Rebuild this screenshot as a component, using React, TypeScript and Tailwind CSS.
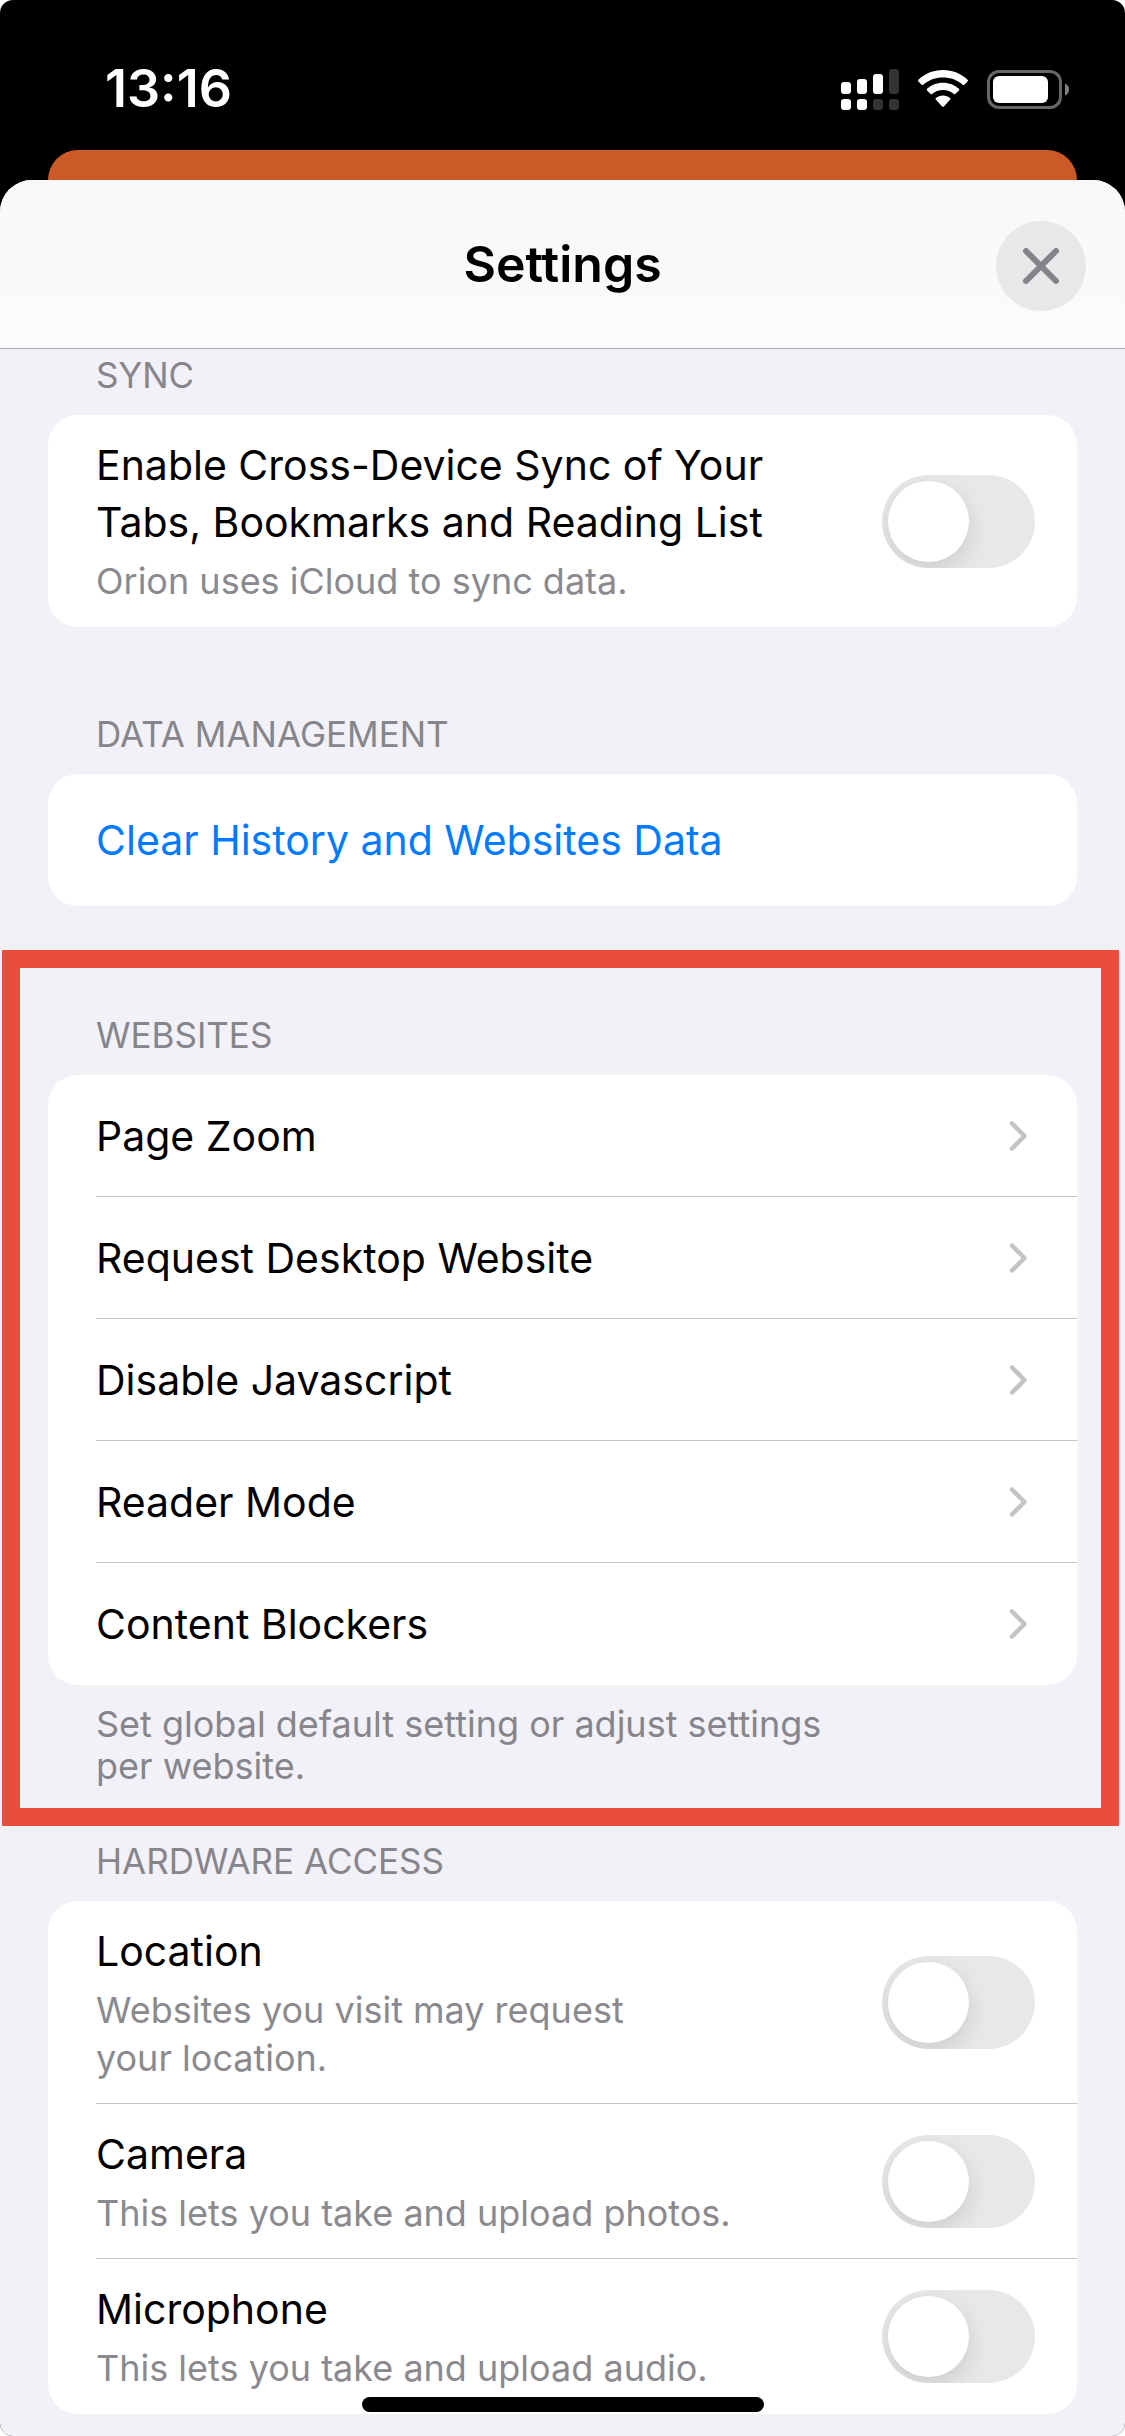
import React, { FC, ReactNode, useId, useState } from 'react';

const websiteLinks = [
  'Page Zoom',
  'Request Desktop Website',
  'Disable Javascript',
  'Reader Mode',
  'Content Blockers',
];

const hardwareItems = [
  { title: 'Location', description: 'Websites you visit may request\nyour location.' },
  { title: 'Camera', description: 'This lets you take and upload photos.' },
  { title: 'Microphone', description: 'This lets you take and upload audio.' },
];

const SignalIcon: FC = () => (
  <svg width="58" height="41" viewBox="0 0 58 41" fill="#fff" aria-hidden="true">
    <rect x="0" y="13" width="10" height="12" rx="3" />
    <rect x="16" y="10" width="10" height="15" rx="3" />
    <rect x="32" y="5" width="10" height="20" rx="3" />
    <rect x="48" y="0" width="10" height="25" rx="3" fill="#333" />
    <rect x="0" y="30" width="10" height="11" rx="3" />
    <rect x="16" y="30" width="10" height="11" rx="3" />
    <rect x="32" y="30" width="10" height="11" rx="3" fill="#333" />
    <rect x="48" y="30" width="10" height="11" rx="3" fill="#333" />
  </svg>
);

const WifiIcon: FC = () => (
  <svg width="50" height="38" viewBox="0 0 50 38" fill="#fff" aria-hidden="true">
    <path d="M25 0C15.400 0 6.700 3.700.400 9.700c-.500.500-.500 1.300 0 1.800l3.200 3.200c.500.500 1.200.500 1.700 0C10.500 9.900 17.400 7.400 25 7.400s14.500 2.500 19.700 7.300c.500.500 1.200.500 1.700 0l3.200-3.200c.500-.500.500-1.300 0-1.800C43.300 3.700 34.600 0 25 0Z" />
    <path d="M25 12.800c-6.200 0-11.700 2.300-15.900 6-.500.500-.500 1.200 0 1.700l3.300 3.300c.500.500 1.200.500 1.700.100 3-2.500 6.700-4 10.900-4s7.900 1.500 10.900 4c.500.400 1.200.400 1.700-.100l3.300-3.300c.500-.500.500-1.200 0-1.700-4.200-3.700-9.700-6-15.900-6Z" />
    <path d="M25 25.600c-2.700 0-5.200.900-7.100 2.400-.500.400-.500 1.100-.100 1.600l6.300 6.800c.500.600 1.300.6 1.800 0l6.300-6.800c.400-.500.400-1.200-.100-1.600-1.900-1.500-4.400-2.400-7.100-2.400Z" />
  </svg>
);

const BatteryIcon: FC = () => (
  <svg width="82" height="39" viewBox="0 0 82 39" aria-hidden="true">
    <rect x="1.5" y="1.5" width="72" height="36" rx="10.5" fill="none" stroke="#666" strokeWidth="3" />
    <rect x="6" y="6" width="55" height="27" rx="6" fill="#fff" />
    <path d="M78 13.500c2.500.8 4 3.200 4 6s-1.500 5.200-4 6Z" fill="#808080" />
  </svg>
);

const Chevron: FC = () => (
  <svg
    width="18"
    height="30"
    viewBox="0 0 18 30"
    fill="none"
    stroke="#c4c4c6"
    strokeWidth="4.500"
    strokeLinecap="round"
    strokeLinejoin="round"
    aria-hidden="true"
  >
    <path d="M3 2.500l12.500 12.500L3 27.500" />
  </svg>
);

interface SectionProps {
  title: string;
  className?: string;
  children: ReactNode;
}

const Section: FC<SectionProps> = ({ title, className = '', children }) => (
  <section className={`px-12 ${className}`}>
    <h2 className="px-12 pb-[18px] text-[35px] leading-[44px] text-[#85858b] uppercase">{title}</h2>
    {children}
  </section>
);

const Card: FC<{ children: ReactNode }> = ({ children }) => (
  <div className="overflow-hidden rounded-[30px] bg-white">{children}</div>
);

interface ToggleRowProps {
  title: string;
  description: string;
  divider?: boolean;
}

const ToggleRow: FC<ToggleRowProps> = ({ title, description, divider = false }) => {
  const id = useId();
  const [enabled, setEnabled] = useState(false);

  return (
    <div
      className={`ml-12 flex items-center justify-between py-[22px] pr-[42px] ${
        divider ? 'shadow-[inset_0_-1px_0_#c5c5c7]' : ''
      }`}
    >
      <div className="flex flex-col gap-[6px]">
        <label htmlFor={id} className="text-[41px] leading-[57px] whitespace-pre-line text-black">
          {title}
        </label>
        <p id={`${id}-hint`} className="text-[36px] leading-[48px] whitespace-pre-line text-[#8a8a8e]">
          {description}
        </p>
      </div>
      <input
        id={id}
        type="checkbox"
        role="switch"
        aria-describedby={`${id}-hint`}
        checked={enabled}
        onChange={(e) => setEnabled(e.target.checked)}
        className="h-[93px] w-[153px] shrink-0 appearance-none overflow-hidden rounded-full bg-[#e8e8ea] p-[6px] before:block before:size-[81px] before:rounded-full before:bg-white before:shadow-[0_9px_24px_rgba(0,0,0,0.12)] before:transition-transform before:content-[''] checked:bg-[#34c759] checked:before:translate-x-[60px]"
      />
    </div>
  );
};

const StatusBar: FC = () => (
  <div className="flex h-[150px] items-center justify-between pt-7 pr-14 pl-[105px] text-white">
    <span className="text-[52px] leading-[60px] font-semibold">13:16</span>
    <div className="flex items-center gap-[19px]">
      <SignalIcon />
      <WifiIcon />
      <BatteryIcon />
    </div>
  </div>
);

const SheetHeader: FC = () => (
  <header className="grid grid-cols-[1fr_auto_1fr] items-center border-b border-[#acacae] bg-linear-to-b from-[#f8f8fa] to-[#fbfbfd] pt-[41px] pr-[39px] pb-[37px] pl-[39px]">
    <h1 className="col-start-2 pb-1 text-[50px] leading-[60px] font-semibold text-black">Settings</h1>
    <button
      type="button"
      aria-label="Close"
      className="flex size-[90px] items-center justify-center justify-self-end rounded-full bg-[#e8e8ea]"
    >
      <svg width="38" height="38" viewBox="0 0 38 38" stroke="#838388" strokeWidth="6" strokeLinecap="round">
        <path d="M4 4l30 30M34 4L4 34" />
      </svg>
    </button>
  </header>
);

export default function App() {
  return (
    <div className="relative flex min-h-screen flex-col overflow-hidden rounded-[13px] bg-black font-['Inter','Liberation_Sans',sans-serif]">
      <StatusBar />
      <div className="mx-12 h-[60px] rounded-t-[30px] bg-[#cb5a28]" />

      <main className="-mt-[30px] flex-1 overflow-hidden rounded-t-[32px] bg-[#f2f1f7] pb-[22px]">
        <SheetHeader />

        <Section title="Sync" className="pt-1">
          <Card>
            <ToggleRow
              title={'Enable Cross-Device Sync of Your\nTabs, Bookmarks and Reading List'}
              description="Orion uses iCloud to sync data."
            />
          </Card>
        </Section>

        <Section title="Data Management" className="pt-[85px]">
          <Card>
            <button type="button" className="w-full px-12 py-[37px] text-left text-[41px] leading-[58px] text-[#007aff]">
              Clear History and Websites Data
            </button>
          </Card>
        </Section>

        <div className="relative mt-11">
          <Section title="Websites" className="pt-[63px] pb-[39px]">
            <Card>
              <ul className="divide-y divide-[#c5c5c7] pl-12">
                {websiteLinks.map((name) => (
                  <li key={name} className="h-[122px]">
                    <a href="#" className="flex h-full items-center justify-between pr-[50px] text-[41px] leading-[58px] text-black">
                      {name}
                      <Chevron />
                    </a>
                  </li>
                ))}
              </ul>
            </Card>
            <p className="px-12 pt-[18px] text-[36px] leading-[42px] whitespace-pre-line text-[#85858b]">
              {'Set global default setting or adjust settings\nper website.'}
            </p>
          </Section>
          {/* highlight frame over the section */}
          <div className="pointer-events-none absolute inset-y-0 right-[6px] left-[2px] border-[18px] border-[#ea4c3d]" />
        </div>

        <Section title="Hardware Access" className="pt-[13px]">
          <Card>
            {hardwareItems.map((item, i) => (
              <ToggleRow key={item.title} {...item} divider={i < hardwareItems.length - 1} />
            ))}
          </Card>
        </Section>
      </main>

      <div className="absolute bottom-6 left-1/2 h-[15px] w-[402px] -translate-x-1/2 rounded-full bg-black" />
    </div>
  );
}
